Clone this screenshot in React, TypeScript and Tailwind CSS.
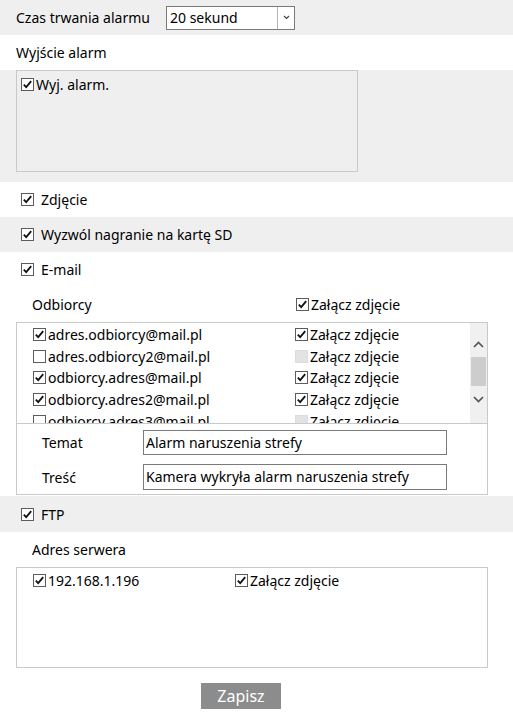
import React from "react";

function Box({ checked = true, disabled = false }: { checked?: boolean; disabled?: boolean }) {
  if (disabled) {
    return (
      <svg width="13" height="13" viewBox="0 0 13 13" className="shrink-0">
        <rect x="0.5" y="0.5" width="12" height="12" fill="#e3e3e3" stroke="#dcdcdc" />
      </svg>
    );
  }
  return (
    <svg width="13" height="13" viewBox="0 0 13 13" className="shrink-0">
      <rect x="0.5" y="0.5" width="12" height="12" fill="#fff" stroke="#5c5c5c" />
      {checked && (
        <path d="M2.8 6.6 L5.2 9.2 L10.2 3.2" fill="none" stroke="#111" strokeWidth="1.8" />
      )}
    </svg>
  );
}

const emails = [
  { a: "adres.odbiorcy@mail.pl", c: true, z: true },
  { a: "adres.odbiorcy2@mail.pl", c: false, z: false },
  { a: "odbiorcy.adres@mail.pl", c: true, z: true },
  { a: "odbiorcy.adres2@mail.pl", c: true, z: true },
  { a: "odbiorcy.adres3@mail.pl", c: false, z: false },
];

export default function App() {
  return (
    <div
      className="w-[513px] h-[722px] bg-white text-[14px] text-black overflow-hidden"
      style={{ fontFamily: '"Noto Sans", "Open Sans", sans-serif' }}
    >
      {/* Czas trwania */}
      <div className="h-[35px] bg-[#efefef] flex items-center pl-4">
        <span className="w-[150px]">Czas trwania alarmu</span>
        <div className="w-[129px] h-[24px] border border-[#7a7a7a] bg-white flex">
          <span className="flex-1 pl-[3px] leading-[22px]">20 sekund</span>
          <span className="w-[17px] border-l border-[#b5b5b5] flex items-center justify-center">
            <svg width="7" height="5" viewBox="0 0 7 5">
              <path d="M1 1 L3.5 3.5 L6 1" fill="none" stroke="#444" strokeWidth="1.2" />
            </svg>
          </span>
        </div>
      </div>
      {/* Wyjście alarm */}
      <div className="h-[35px] flex items-center pl-4">Wyjście alarm</div>
      <div className="h-[112px] bg-[#efefef] pl-4">
        <div className="w-[342px] h-[102px] border border-[#c9c9c9] flex items-start pt-[3px] pl-1 gap-[2px]">
          <span className="mt-[4px]"><Box /></span>
          <span>Wyj. alarm.</span>
        </div>
      </div>
      {/* Zdjęcie */}
      <div className="h-[35px] flex items-center pl-[21px] gap-[7px]">
        <Box />
        <span>Zdjęcie</span>
      </div>
      <div className="h-[35px] bg-[#efefef] flex items-center pl-[21px] gap-[7px]">
        <Box />
        <span>Wyzwól nagranie na kartę SD</span>
      </div>
      <div className="h-[35px] flex items-center pl-[21px] gap-[7px]">
        <Box />
        <span>E-mail</span>
      </div>
      {/* Odbiorcy */}
      <div className="h-[35px] flex items-center pl-8">
        <span className="w-[264px]">Odbiorcy</span>
        <Box />
        <span className="ml-[2px]">Załącz zdjęcie</span>
      </div>
      <div className="ml-4 w-[472px] h-[173px] border border-[#c9c9c9] flex flex-col">
        <div className="h-[101px] border-b border-[#c9c9c9] flex overflow-hidden">
          <div className="flex-1 pt-[1px] overflow-hidden">
            {emails.map((e) => (
              <div key={e.a} className="h-[21.6px] flex items-center pl-4">
                <span className="w-[262px] flex items-center gap-[2px]">
                  <Box checked={e.c} />
                  <span>{e.a}</span>
                </span>
                <span className="flex items-center gap-[2px]">
                  <Box checked={e.z} disabled={!e.z} />
                  <span>Załącz zdjęcie</span>
                </span>
              </div>
            ))}
          </div>
          <div className="w-[17px] bg-[#f0f0f0] flex flex-col items-center">
            <div className="h-[34px] flex items-end justify-center pb-[9px]">
              <svg width="11" height="7" viewBox="0 0 11 7">
                <path d="M1 6 L5.5 1.5 L10 6" fill="none" stroke="#555" strokeWidth="1.7" />
              </svg>
            </div>
            <div className="w-[15px] h-[29px] bg-[#cdcdcd]" />
            <div className="h-[27px] flex items-center justify-center">
              <svg width="11" height="7" viewBox="0 0 11 7">
                <path d="M1 1 L5.5 5.5 L10 1" fill="none" stroke="#555" strokeWidth="1.7" />
              </svg>
            </div>
          </div>
        </div>
        <div className="flex-1 flex flex-col pt-[6px] gap-[9px]">
          <div className="flex items-center pl-[25px]">
            <span className="w-[101px]">Temat</span>
            <div className="w-[304px] h-[25px] border border-[#7a7a7a] pl-[2px] leading-[23px]">
              Alarm naruszenia strefy
            </div>
          </div>
          <div className="flex items-center pl-[25px]">
            <span className="w-[101px]">Treść</span>
            <div className="w-[304px] h-[26px] border border-[#7a7a7a] pl-[2px] leading-[24px]">
              Kamera wykryła alarm naruszenia strefy
            </div>
          </div>
        </div>
      </div>
      {/* FTP */}
      <div className="h-[36px] mt-[1px] bg-[#efefef] flex items-center pl-[21px] gap-[7px]">
        <Box />
        <span>FTP</span>
      </div>
      <div className="h-[35px] flex items-center pl-8">Adres serwera</div>
      <div className="ml-4 w-[472px] h-[101px] border border-[#c9c9c9] pt-[2px]">
        <div className="h-[21px] flex items-center pl-4">
          <span className="w-[202px] flex items-center gap-[2px]">
            <Box />
            <span>192.168.1.196</span>
          </span>
          <span className="flex items-center gap-[2px]">
            <Box />
            <span>Załącz zdjęcie</span>
          </span>
        </div>
      </div>
      <div className="pt-[15px] pl-[201px]">
        <button className="w-[80px] h-[26px] bg-[#8c8c8c] text-white text-[16px] leading-[26px]">
          Zapisz
        </button>
      </div>
    </div>
  );
}
